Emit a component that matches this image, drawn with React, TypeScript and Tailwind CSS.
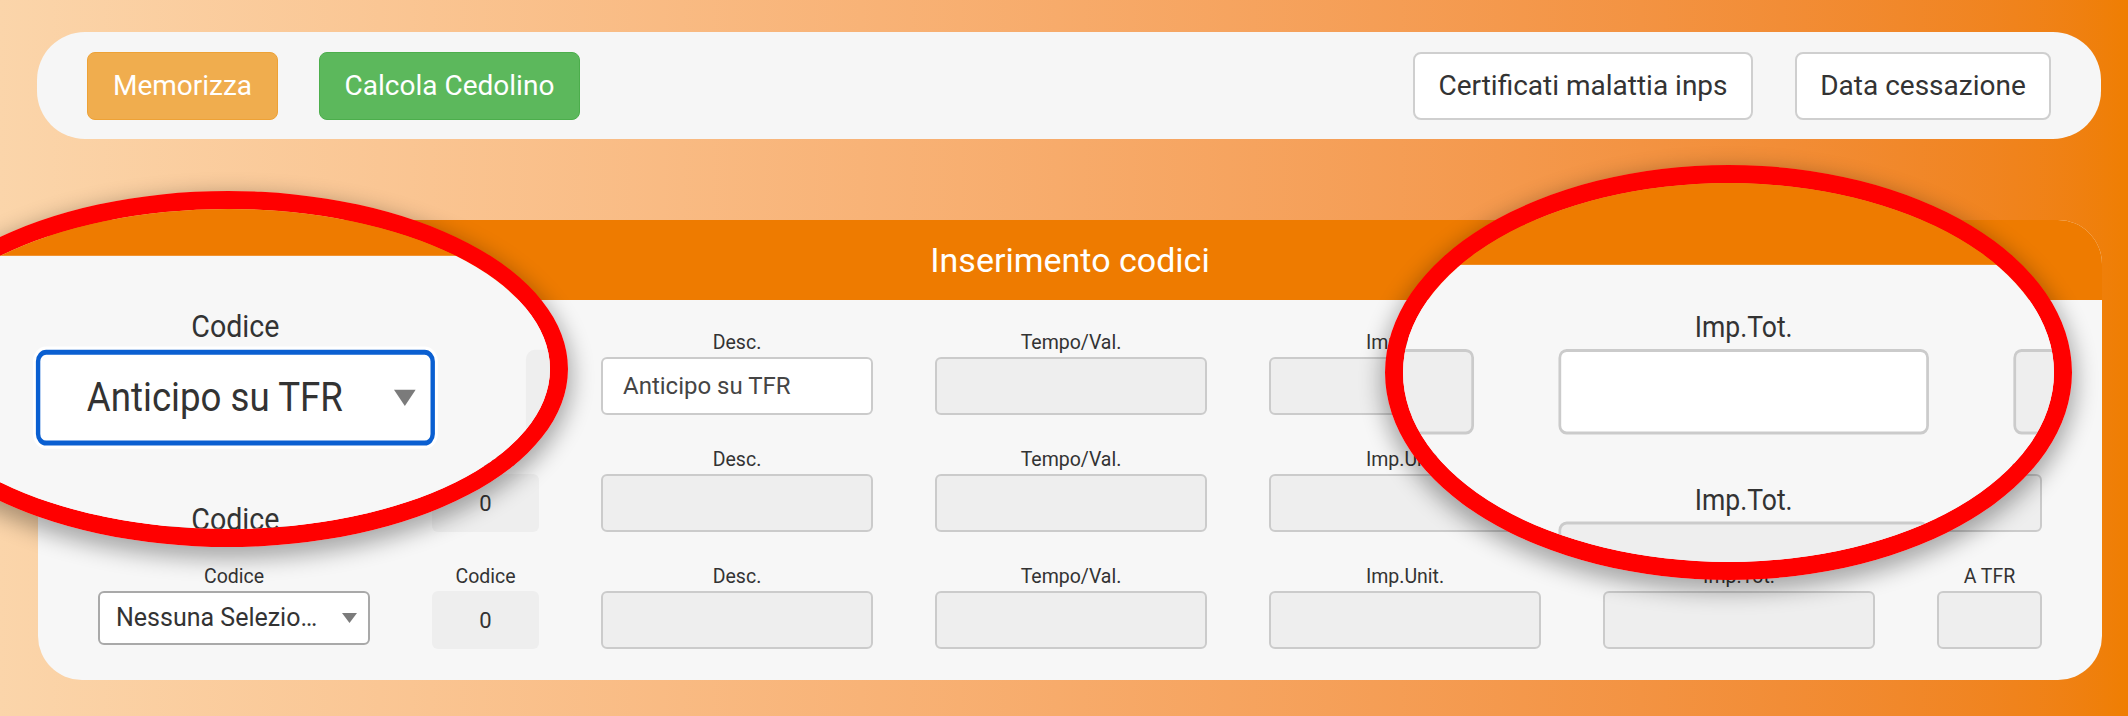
import React from "react";

type Cell =
  | { kind: "select"; text: string; focused?: boolean }
  | { kind: "num"; value: string }
  | { kind: "gray" }
  | { kind: "white"; text?: string };

const LABELS = ["Codice", "Codice", "Desc.", "Tempo/Val.", "Imp.Unit.", "Imp.Tot.", "A TFR"];

const ROWS: Cell[][] = [
  [
    { kind: "select", text: "Anticipo su TFR", focused: true },
    { kind: "num", value: "" },
    { kind: "white", text: "Anticipo su TFR" },
    { kind: "gray" },
    { kind: "gray" },
    { kind: "white" },
    { kind: "gray" },
  ],
  [
    { kind: "select", text: "Nessuna Selezione" },
    { kind: "num", value: "0" },
    { kind: "gray" },
    { kind: "gray" },
    { kind: "gray" },
    { kind: "gray" },
    { kind: "gray" },
  ],
  [
    { kind: "select", text: "Nessuna Selezione" },
    { kind: "num", value: "0" },
    { kind: "gray" },
    { kind: "gray" },
    { kind: "gray" },
    { kind: "gray" },
    { kind: "gray" },
  ],
];

function Triangle() {
  return (
    <svg width="15" height="10" viewBox="0 0 15 10" className="shrink-0">
      <polygon points="0,0 15,0 7.5,10" fill="#7b7b7b" />
    </svg>
  );
}

function Control({ cell }: { cell: Cell }) {
  if (cell.kind === "select") {
    return cell.focused ? (
      <div className="flex h-[58px] w-full items-center rounded-[7px] border-[3px] border-[#0a5fd1] bg-white pl-[15px] pr-[10px] shadow-[0_0_0_2px_#ffffff]">
        <span className="min-w-0 flex-1 truncate text-center text-[25px] text-[#333]">{cell.text}</span>
        <span className="ml-[18px] flex">
          <Triangle />
        </span>
      </div>
    ) : (
      <div className="flex h-[54px] w-full items-center rounded-[6px] border-2 border-[#a9a9a9] bg-white pl-[16px] pr-[11px]">
        <span className="min-w-0 flex-1 truncate text-center text-[25px] text-[#333]">{cell.text}</span>
        <span className="ml-[18px] flex">
          <Triangle />
        </span>
      </div>
    );
  }
  if (cell.kind === "num") {
    return (
      <div className="flex h-[58px] w-full items-center justify-center rounded-[6px] bg-[#eeeeee] text-[22px] text-[#333]">
        {cell.value}
      </div>
    );
  }
  if (cell.kind === "white") {
    return (
      <div className="flex h-[58px] w-full items-center rounded-[6px] border-2 border-[#cbcbcb] bg-white pl-[20px] text-[24px] text-[#454545]">
        {cell.text}
      </div>
    );
  }
  return <div className="h-[58px] w-full rounded-[6px] border-2 border-[#cbcbcb] bg-[#eeeeee]" />;
}

function Row({ cells, visible, show }: { cells: Cell[]; visible?: number[]; show: boolean }) {
  return (
    <div className="grid grid-cols-[272px_107px_272px_272px_272px_272px_105px] gap-x-[62px]">
      {cells.map((c, i) => {
        const on = show && (!visible || visible.includes(i));
        return (
          <div key={i} className={`flex flex-col items-center ${on ? "" : "invisible"}`}>
            <div className="h-[24px] whitespace-nowrap text-[19.5px] leading-[24px] text-[#333]">{LABELS[i]}</div>
            <div className="mt-[2px] w-full">
              <Control cell={c} />
            </div>
          </div>
        );
      })}
    </div>
  );
}

function TopBar() {
  return (
    <div className="ml-[37px] flex h-[107px] w-[2064px] items-center justify-between rounded-[48px] bg-[#f6f6f6] px-[50px]">
      <div className="flex gap-[41px]">
        <div className="flex h-[68px] w-[191px] items-center justify-center rounded-[8px] border border-[#eea236] bg-[#f0ad4e] text-[28px] text-white">
          Memorizza
        </div>
        <div className="flex h-[68px] w-[261px] items-center justify-center rounded-[8px] border border-[#4cae4c] bg-[#5cb85c] text-[28px] text-white">
          Calcola Cedolino
        </div>
      </div>
      <div className="flex gap-[42px]">
        <div className="flex h-[68px] w-[340px] items-center justify-center rounded-[8px] border-2 border-[#cfcfcf] bg-white text-[28px] text-[#333]">
          Certificati malattia inps
        </div>
        <div className="flex h-[68px] w-[256px] items-center justify-center rounded-[8px] border-2 border-[#cfcfcf] bg-white text-[28px] text-[#333]">
          Data cessazione
        </div>
      </div>
    </div>
  );
}

function Page({ visible }: { visible?: number[] }) {
  const magnified = !!visible;
  return (
    <div className="h-[716px] w-[2128px] bg-linear-to-r from-[#fbd5aa] to-[#ef7e02] pt-[32px]">
      {magnified ? <div className="h-[107px]" /> : <TopBar />}

      <div className="ml-[38px] mt-[81px] w-[2064px] overflow-hidden rounded-[44px] bg-[#f7f7f7]">
        <div className="flex h-[80px] items-center justify-center bg-[#ee7b00] text-[34px] text-white">
          <span className={magnified ? "invisible" : ""}>Inserimento codici</span>
        </div>
        <div className="flex flex-col gap-[33px] px-[60px] pb-[31px] pt-[31px]">
          {ROWS.map((r, i) => (
            <Row key={i} cells={r} visible={visible} show={!magnified || i < 2} />
          ))}
        </div>
      </div>
    </div>
  );
}

function Magnifier({ outer, inner, visible }: { outer: string; inner: string; visible: number[] }) {
  return (
    <div
      className={`absolute overflow-hidden rounded-[50%] border-[18px] border-[#ff0000] shadow-[0_8px_22px_4px_rgba(0,0,0,0.32)] ${outer}`}
    >
      <div className={`absolute ${inner}`}>
        <Page visible={visible} />
      </div>
    </div>
  );
}

export default function App() {
  return (
    <div className="relative h-[716px] w-[2128px] overflow-hidden font-['Roboto',sans-serif]">
      <Page />
      <Magnifier
        outer="left-[-112px] top-[191px] h-[356px] w-[680px]"
        inner="left-[94px] top-[-209px] origin-[231px_368px] scale-x-[1.467] scale-y-[1.65]"
        visible={[0, 1]}
      />
      <Magnifier
        outer="left-[1385px] top-[165px] h-[415px] w-[687px]"
        inner="left-[-1403px] top-[-183px] origin-[1726px_374px] scale-x-[1.362] scale-y-[1.475]"
        visible={[4, 5, 6]}
      />
    </div>
  );
}
